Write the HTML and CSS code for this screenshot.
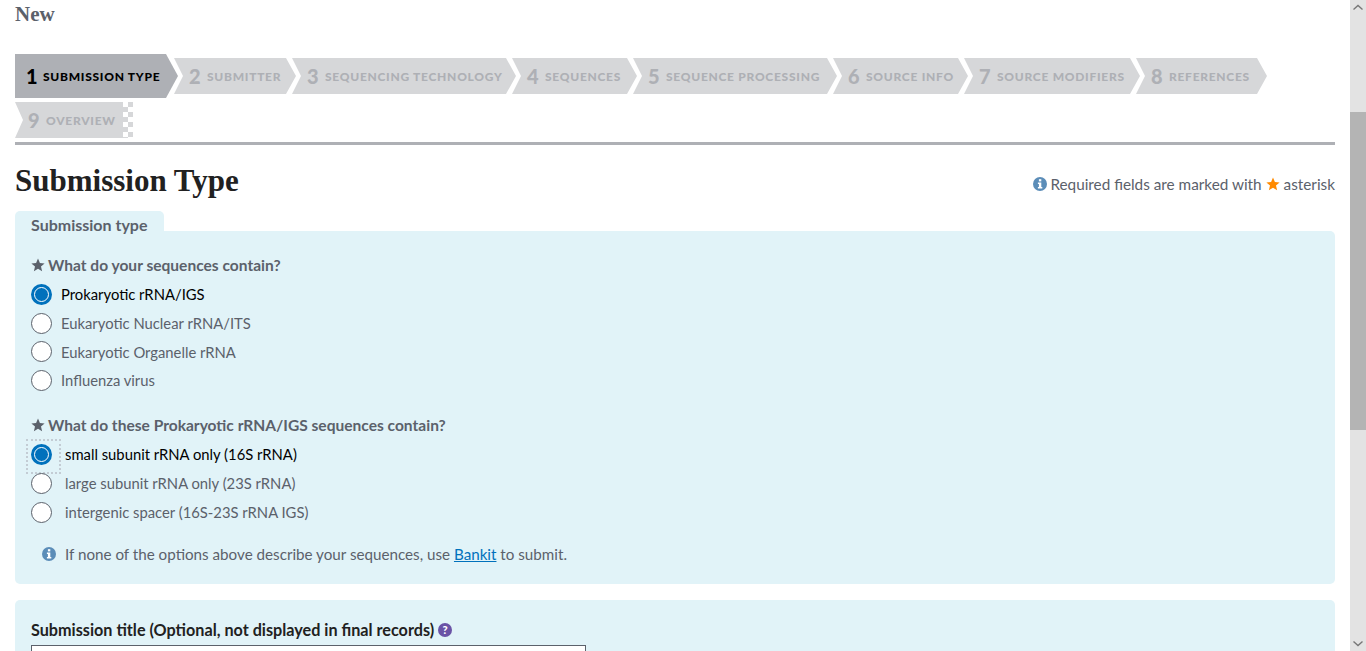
FILE: index.html
```html
<!DOCTYPE html>
<html lang="en">
<head>
<meta charset="utf-8">
<title>Submission Type</title>
<link rel="stylesheet" href="styles.css">
</head>
<body>
<div class="app">
  <main class="main">
    <div class="crumb">New</div>
    <ol class="steps">
      <li class="step active s1"><b>1</b><span>Submission Type</span></li>
      <li class="step s2"><b>2</b><span>Submitter</span></li>
      <li class="step s3"><b>3</b><span>Sequencing Technology</span></li>
      <li class="step s4"><b>4</b><span>Sequences</span></li>
      <li class="step s5"><b>5</b><span>Sequence Processing</span></li>
      <li class="step s6"><b>6</b><span>Source Info</span></li>
      <li class="step s7"><b>7</b><span>Source Modifiers</span></li>
      <li class="step s8"><b>8</b><span>References</span></li>
      <li class="last"><div class="step s9"><b>9</b><span>Overview</span></div><div class="finish"></div></li>
    </ol>
    <div class="head">
      <h1>Submission Type</h1>
      <p class="required">
        <svg class="ico" viewBox="0 0 14 14"><circle cx="7" cy="7" r="7" fill="#5b8db8"/><rect x="5.9" y="2.2" width="2.4" height="2.2" fill="#fff"/><path d="M4.9 5.5h3.4v4.6h1v1.5H4.9v-1.5h1V7H4.9z" fill="#fff"/></svg>
        <span>Required fields are marked with</span>
        <svg class="star orange" viewBox="0 0 14 14"><path d="M7 .6l1.9 4.4 4.7.4-3.6 3.1 1.1 4.7L7 10.7l-4.1 2.5L4 8.5.4 5.4l4.7-.4z"/></svg>
        <span>asterisk</span>
      </p>
    </div>
    <div class="tab">Submission type</div>
    <section class="panel first">
      <h2 class="q"><svg class="star grey" viewBox="0 0 14 14"><path d="M7 .6l1.9 4.4 4.7.4-3.6 3.1 1.1 4.7L7 10.7l-4.1 2.5L4 8.5.4 5.4l4.7-.4z"/></svg>What do your sequences contain?</h2>
      <div class="opts">
        <div class="opt on"><i class="radio"></i>Prokaryotic rRNA/IGS</div>
        <div class="opt"><i class="radio"></i>Eukaryotic Nuclear rRNA/ITS</div>
        <div class="opt"><i class="radio"></i>Eukaryotic Organelle rRNA</div>
        <div class="opt"><i class="radio"></i>Influenza virus</div>
      </div>
      <h2 class="q q2"><svg class="star grey" viewBox="0 0 14 14"><path d="M7 .6l1.9 4.4 4.7.4-3.6 3.1 1.1 4.7L7 10.7l-4.1 2.5L4 8.5.4 5.4l4.7-.4z"/></svg>What do these Prokaryotic rRNA/IGS sequences contain?</h2>
      <div class="opts wide">
        <div class="opt on focus"><i class="radio"></i>small subunit rRNA only (16S rRNA)</div>
        <div class="opt"><i class="radio"></i>large subunit rRNA only (23S rRNA)</div>
        <div class="opt"><i class="radio"></i>intergenic spacer (16S-23S rRNA IGS)</div>
      </div>
      <p class="note">
        <svg class="ico" viewBox="0 0 14 14"><circle cx="7" cy="7" r="7" fill="#5b8db8"/><rect x="5.9" y="2.2" width="2.4" height="2.2" fill="#fff"/><path d="M4.9 5.5h3.4v4.6h1v1.5H4.9v-1.5h1V7H4.9z" fill="#fff"/></svg>
        <span>If none of the options above describe your sequences, use <a href="#">Bankit</a> to submit.</span>
      </p>
    </section>
    <section class="panel second">
      <label class="title-label">Submission title (Optional, not displayed in final records)
        <svg class="ico" viewBox="0 0 14 14"><circle cx="7" cy="7" r="7" fill="#6a53a6"/><text x="7" y="11" text-anchor="middle" class="qmark">?</text></svg>
      </label>
      <input class="title-input" type="text">
    </section>
  </main>
  <div class="scrollbar">
    <svg class="arrow" viewBox="0 0 16 16"><path d="M3.5 9.5L8 5.5l4.5 4" fill="none" stroke="#777" stroke-width="1.4"/></svg>
    <div class="track"><div class="thumb"></div></div>
    <svg class="arrow" viewBox="0 0 16 16"><path d="M3.5 6.5L8 10.5l4.5-4" fill="none" stroke="#777" stroke-width="1.4"/></svg>
  </div>
</div>
</body>
</html>
```
FILE: styles.css
```css
* { box-sizing: border-box; }
html, body { margin: 0; height: 651px; overflow: hidden; background: #fff; }
body { font-family: Lato, "Open Sans", sans-serif; font-size: 15.3px; color: #212121; }
.app { display: flex; height: 651px; }
.main { width: 1350px; padding: 0 15px; height: 651px; overflow: hidden; flex: none; }

.crumb { font-family: "Liberation Serif", serif; font-weight: 700; font-size: 21px; line-height: 28px; color: #5b616b; height: 54px; }

.steps { list-style: none; margin: 0; padding: 0 0 4px; display: flex; flex-wrap: wrap; align-items: center; row-gap: 4px; border-bottom: 3px solid #aeb0b5; }
.step { height: 36px; margin-right: -4px; padding-left: 15px; display: flex; align-items: center; flex: none; white-space: nowrap; background: #d6d7d9; color: #aeb0b5; clip-path: polygon(0 0, calc(100% - 10px) 0, 100% 50%, calc(100% - 10px) 100%, 0 100%, 9px 50%); }
.step b { font-size: 20px; font-weight: 900; width: 18px; flex: none; line-height: 1; }
.step span { font-size: 12px; font-weight: 900; letter-spacing: .72px; text-transform: uppercase; }
.active { height: 44px; background: #aeb0b5; color: #000; padding-left: 11px; clip-path: polygon(0 0, calc(100% - 12px) 0, 100% 50%, calc(100% - 12px) 100%, 0 100%); }
.active b { width: 17px; }
.s1 { width: 163px; }
.s2 { width: 122px; }
.s3 { width: 224px; }
.s4 { width: 125px; }
.s5 { width: 204px; }
.s6 { width: 135px; }
.s7 { width: 176px; }
.s8 { width: 131px; }
.s9 { width: 108px; margin-right: 0; padding-left: 13px; clip-path: polygon(0 0, 100% 0, 100% 100%, 0 100%, 8px 50%); }
.last { display: flex; }
.finish { width: 10px; height: 36px; background: repeating-conic-gradient(#d6d7d9 0 25%, #fff 0 50%) 0 0 / 10px 10px; }

.head { display: flex; justify-content: space-between; align-items: center; height: 66px; }
h1 { margin: 4px 0 0; font-family: "Liberation Serif", serif; font-weight: 700; font-size: 31px; color: #212121; line-height: 1; }
.required { margin: 12px 0 0; color: #5b616b; display: flex; align-items: center; gap: 3px; white-space: nowrap; }
.required .orange { margin: 0 1px; }
.ico { width: 14px; height: 14px; flex: none; }
.star { width: 14px; height: 14px; flex: none; }
.orange { fill: #ff8a00; }
.grey { fill: #5b616b; }

.tab { width: 149px; height: 20px; background: #e1f3f8; border-radius: 5px 5px 0 0; padding-left: 16px; font-weight: 700; font-size: 16px; line-height: 27px; color: #5b616b; }
.panel { background: #e1f3f8; border-radius: 5px; padding: 0 16px; }
.first { height: 353px; border-top-left-radius: 0; padding-top: 23px; }
.second { margin-top: 16px; height: 60px; padding-top: 20px; }

.q { margin: 0; font-size: 15.55px; font-weight: 700; color: #5b616b; line-height: 22px; display: flex; align-items: center; gap: 3px; }
.q2 { margin-top: 19px; }
.opts { margin-top: 4px; }
.opt { height: 28.7px; display: flex; align-items: center; color: #5b616b; position: relative; white-space: nowrap; font-size: 14.8px; }
.wide .opt { height: 29px; }
.on { color: #000; }
.radio { width: 21px; height: 21px; margin-right: 9px; border: 1px solid #5b616b; border-radius: 50%; background: #fff; flex: none; }
.on .radio { border: 3px solid #0071bc; background: #0071bc; position: relative; }
.on .radio::after { content: ""; position: absolute; inset: 0; border-radius: 50%; border: 1.6px solid #fff; }
.wide .radio { margin-right: 13px; }
.focus::before { content: ""; position: absolute; left: -5px; top: -1px; width: 31px; height: 31px; border: 2px dotted #c3ccd4; }

.note { margin: 16px 0 0; display: flex; align-items: center; gap: 9px; padding-left: 11px; color: #5b616b; line-height: 22px; font-size: 15.2px; }
a { color: #0071bc; text-decoration: underline; }

.title-label { display: flex; align-items: center; gap: 4px; font-weight: 700; font-size: 16.2px; color: #212121; line-height: 20px; white-space: nowrap; }
.qmark { font-family: Lato, sans-serif; font-size: 11px; font-weight: 900; fill: #fff; }
.title-input { display: block; width: 555px; height: 36px; margin-top: 5px; border: 1px solid #5b616b; background: #fff; border-radius: 0; padding: 0; }

.scrollbar { width: 16px; height: 651px; background: #e3e3e3; display: flex; flex-direction: column; flex: none; }
.arrow { width: 16px; height: 16px; flex: none; }
.track { flex: 1; padding-top: 96px; }
.thumb { height: 318px; background: #b4b4b4; }
```
